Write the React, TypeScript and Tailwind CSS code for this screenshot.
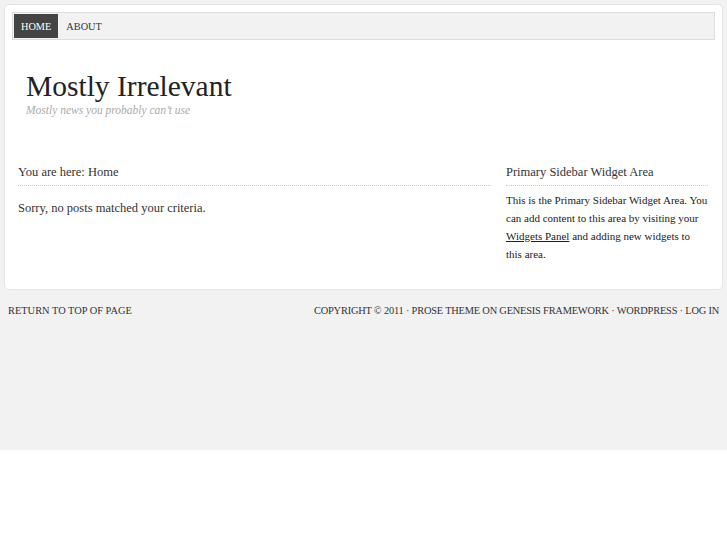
import React from 'react';

const serif = "font-['Liberation_Serif','Times_New_Roman',serif]";

const App: React.FC = () => {
    return (
        <div className={`min-h-[545px] bg-white ${serif}`}>
            <div className="bg-[#f2f2f2] h-[450px] pt-[4px] px-[4px]">
                <div className="bg-white rounded-[5px] border border-[#e6e6e6] h-[286px] px-[7px] pt-[7px]">
                    {/* Nav */}
                    <div className="flex border border-[#dddddd] bg-[#f2f2f2] h-[28px] p-px">
                        <a className="bg-[#444444] text-white text-[10.3px] px-[7px] leading-[25px] uppercase">Home</a>
                        <a className="text-[#333333] text-[10.3px] px-[8px] leading-[25px] uppercase">About</a>
                    </div>
                    {/* Header */}
                    <div className="pl-[14px] pt-[29px] h-[120px]">
                        <h1 className="text-[29.5px] leading-[34px] text-[#222222]">Mostly Irrelevant</h1>
                        <p className="italic text-[11.5px] text-[#aaaaaa] leading-[14px]">Mostly news you probably can&#8217;t use</p>
                    </div>
                    {/* Content + sidebar */}
                    <div className="flex pl-[6px]">
                        <div className="w-[473px]">
                            <div className="text-[12.5px] text-[#333333] pt-[3px] pb-[3px] border-b border-dotted border-[#cccccc]">
                                You are here: Home
                            </div>
                            <p className="text-[12.5px] text-[#333333] pt-[13px]">Sorry, no posts matched your criteria.</p>
                        </div>
                        <div className="w-[202px] ml-[15px]">
                            <h4 className="text-[12.5px] text-[#333333] pt-[3px] pb-[3px] border-b border-dotted border-[#cccccc]">
                                Primary Sidebar Widget Area
                            </h4>
                            <p className="text-[11px] leading-[18px] text-[#222222] pt-[5px]">
                                This is the Primary Sidebar Widget Area. You can add content to this area by visiting your{' '}
                                <a className="underline">Widgets Panel</a> and adding new widgets to this area.
                            </p>
                        </div>
                    </div>
                </div>
                {/* Footer */}
                <div className="flex justify-between pt-[13px] px-[4px] text-[10.4px] uppercase text-[#333333]">
                    <span>Return to top of page</span>
                    <span className="tracking-[-0.2px]">Copyright &copy; 2011 &middot; Prose Theme on Genesis Framework &middot; WordPress &middot; Log in</span>
                </div>
            </div>
        </div>
    );
};

export default App;
